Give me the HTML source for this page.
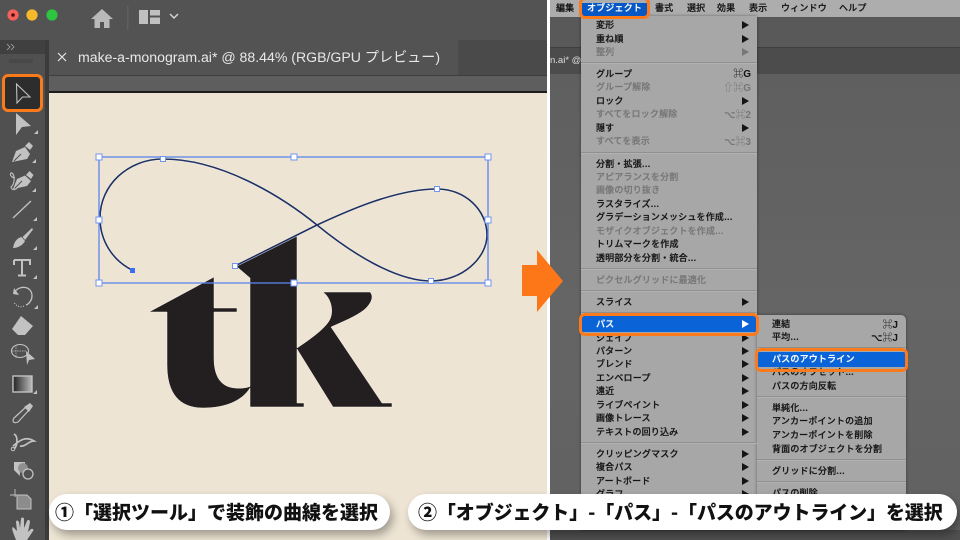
<!DOCTYPE html>
<html lang="ja"><head><meta charset="utf-8"><style>
html,body{margin:0;padding:0;width:960px;height:540px;overflow:hidden;background:#fff}
body{position:relative;font-family:"Liberation Sans","Noto Sans CJK JP",sans-serif}
div{position:absolute;box-sizing:border-box}
.m{font-size:9px;line-height:12px;height:12px;white-space:nowrap;color:#141414;font-weight:500;font-family:"Noto Sans CJK JP",sans-serif;letter-spacing:.02em;-webkit-text-stroke:.2px}
.d{color:#767676}
.w{color:#fff}
.s{height:2px;background:linear-gradient(#909090 50%,#b2b2b2 50%)}
.ar{width:0;height:0;border-left:7px solid #141414;border-top:4px solid transparent;border-bottom:4px solid transparent;left:742px}
.sc{font-size:10px;line-height:12px;color:#141414;font-weight:700;text-align:right;white-space:nowrap;font-family:"Liberation Sans","Noto Sans CJK JP","DejaVu Sans",sans-serif}
.o{border:3px solid #fb7a1c;border-radius:6px}
.p{background:#fff;border-radius:18px;box-shadow:3px 5px 9px rgba(0,0,0,.33);height:36px;top:494px;color:#111;font-weight:900;font-size:19px;line-height:35px;white-space:nowrap;font-family:"Noto Sans CJK JP",sans-serif}
</style></head><body>
<!-- left panel -->
<div style="left:0;top:0;width:547px;height:540px;background:#ede4d3;overflow:hidden">
<div style="left:0;top:0;width:547px;height:40px;background:#535353"></div>
<div style="left:0;top:40px;width:45px;height:500px;background:#505050"></div>
<div style="left:0;top:40px;width:45px;height:14px;background:#404040"></div>
<div style="left:45px;top:40px;width:4px;height:500px;background:#3b3b3b"></div>
<div style="left:49px;top:40px;width:498px;height:35px;background:#4a4a4a"></div>
<div style="left:49px;top:40px;width:409px;height:35px;background:#535353"></div>
<div style="left:49px;top:75px;width:498px;height:16px;background:#5e5e5e;border-top:1px solid #3e3e3e"></div>
<div style="left:49px;top:91px;width:498px;height:2px;background:#1d1d1d"></div>
<div style="left:78px;top:48px;font-size:14.1px;line-height:18px;color:#e8e8e8;white-space:nowrap">make-a-monogram.ai* @ 88.44% (RGB/GPU プレビュー)</div>
<svg width="547" height="540" viewBox="0 0 547 540" style="position:absolute;left:0;top:0">
<circle cx="13" cy="15" r="5.6" fill="#f4605a"/><circle cx="13" cy="15" r="1.8" fill="#4a0d0a"/>
<circle cx="32" cy="15" r="5.6" fill="#f7b92c"/><circle cx="52" cy="15" r="5.6" fill="#2cc640"/>
<path d="M102 9L91 19H94.500V28H100V22H104V28H109.500V19H113Z" fill="#b9b9b9"/>
<rect x="127" y="6" width="1.500" height="24" fill="#5f5f5f"/>
<path d="M139 10H148V24H139ZM150 10H160V15.500H150ZM150 17.500H160V24H150Z" fill="#c0c0c0"/>
<path d="M170 14L174 18L178 14" fill="none" stroke="#d5d5d5" stroke-width="1.500"/>
<path d="M7 44L10 47L7 50M11 44L14 47L11 50" fill="none" stroke="#a8a8a8" stroke-width=".8"/>
<path d="M10 59v4M12 59v4M14 59v4M16 59v4M18 59v4M20 59v4M22 59v4M24 59v4M26 59v4M28 59v4M30 59v4M32 59v4" stroke="#3c3c3c" stroke-width=".7"/>
<path d="M58 53L66 61M66 53L58 61" fill="none" stroke="#e5e5e5" stroke-width="1.200"/>
<rect x="4" y="77" width="36" height="33" rx="3" fill="#2d2d2d"/>
<path d="M16.500 84L17 103L22.500 97L30 97Z" fill="none" stroke="#c0c0c0" stroke-width="1.100"/>
<g fill="#c2c2c2" stroke="none">
<path d="M16 113L16 135L22 127L31 126Z"/><path d="M38 134h-4l4-4z"/>
<path d="M36 163h-4l4-4z"/><path d="M36 192h-4l4-4z"/><path d="M37 221h-4l4-4z"/><path d="M37 250h-4l4-4z"/><path d="M37 279h-4l4-4z"/><path d="M38 309h-4l4-4z"/><path d="M37 394h-4l4-4z"/>
<path d="M25 146L29 142L33 146L30 150Z"/>
<path d="M12 162L16 151L25 147L30 154L27 159Z"/>
<path d="M26 175L29.500 171L33.500 175L31 179Z"/>
<path d="M13 189L17 179L25 175.500L31 181L27 186Z"/>
<path d="M32 228L33 229.500L25 240L22.500 237Z"/>
<path d="M13 248C14 242 17 238 21.500 237L25 241C23 245 18 248 13 248Z"/>
<path d="M21 316L33 326L25 335H18L12 329Z"/>
<path d="M14 462h11v5a8 8 0 0 0-5 9L14 470Z"/>
<path d="M16 540C13 532 11 528 13 527L17 531L16 522C16 520 18 520 19 522L20 528L21 519C21 517 24 517 24 519L24 528L27 521C28 519 30 520 30 522L28 532L31 529C33 528 34 530 33 531L27 540Z"/>
</g>
<path d="M14 161L21 154" stroke="#505050" stroke-width="1"/>
<path d="M15 188L22 181" stroke="#505050" stroke-width="1"/>
<defs><linearGradient id="g" x1="0" x2="1"><stop offset="0" stop-color="#222"/><stop offset="1" stop-color="#bbb"/></linearGradient></defs>
<rect x="13" y="376" width="19" height="16" fill="url(#g)" stroke="#c2c2c2" stroke-width="1.400"/>
<path d="M13 218L31 201" stroke="#c2c2c2" stroke-width="1.300"/>
<path d="M15 178C9 177 10 172 12 173C15 175 15 184 11 187C12 191 16 190 18 187" fill="none" stroke="#c2c2c2" stroke-width="1.100"/>
<path d="M14 260H30V265M14 260V265M22 260V275M18 275.500H26" fill="none" stroke="#c2c2c2" stroke-width="2"/>
<path d="M14 293C18 285 32 285 32 296C32 300 29 304 26 305" fill="none" stroke="#c2c2c2" stroke-width="1.300"/>
<path d="M14 288L13 294L19 295Z" fill="#c2c2c2"/>
<path d="M24 306C20 308 16 306 14 302" fill="none" stroke="#c2c2c2" stroke-width="1.200" stroke-dasharray="1 1.500"/>
<ellipse cx="20" cy="351" rx="8.500" ry="6.500" fill="none" stroke="#c2c2c2" stroke-width="1.100"/>
<path d="M12 351H26M16 345V358" stroke="#c2c2c2" stroke-width=".7" stroke-dasharray="1.500 1"/>
<path d="M26 351L35 359L29 360L27 365Z" fill="#c2c2c2"/>
<path d="M14 418L26 407L29 410L18 422C13 424 12 421 14 418Z" fill="none" stroke="#c2c2c2" stroke-width="1.200"/>
<path d="M24 407L30 403L33 406L29 412Z" fill="#c2c2c2"/>
<path d="M14 434C18 436 18 445 14 449M13 446C20 440 26 436 34 441C28 441 26 447 20 446" fill="none" stroke="#c2c2c2" stroke-width="1.700"/>
<circle cx="13" cy="449" r="1.800" fill="none" stroke="#c2c2c2"/>
<circle cx="23" cy="468" r="5" fill="#8f8f8f"/><circle cx="28" cy="474" r="5" fill="#505050" stroke="#c2c2c2" stroke-width="1.300"/>
<path d="M15 489V497M10 495H19" stroke="#c2c2c2" stroke-width=".9"/>
<path d="M17 495H27L31 499V509H17Z" fill="#8c8c8c" stroke="#c2c2c2" stroke-width="1"/>
<!-- tk -->
<path d="M214 277V308H237V312H214V358C214 378 222 387 235 388C241 388.500 246 388 250 386.500V278L236 266L297 236V348C312 338 324 329 329 321C334 313 332 299 323 292H370C374 296 372 303 364 310C355 317 342 322 331 327L382 403H392V407H333L297 349V403H304V407H250V388C242 401 225 408 203 408C179 408 167 393 167 365V312H149Z" fill="#231f20" stroke="#f8f3e9" stroke-width=".5"/>
<!-- curve -->
<path d="M132 270C112 260 100 240 100 218C100 185 128 159 163 159C220 159 280 195 317 225C350 252 395 281 431 281C462 281 487 258 487 235C487 210 465 189 437 189C395 189 345 212 317 225L297 235L235 266" fill="none" stroke="#f6f2ea" stroke-width="2.500"/>
<path d="M132 270C112 260 100 240 100 218C100 185 128 159 163 159C220 159 280 195 317 225C350 252 395 281 431 281C462 281 487 258 487 235C487 210 465 189 437 189C395 189 345 212 317 225L297 235L235 266" fill="none" stroke="#1f3263" stroke-width="1.600"/>
<rect x="99" y="157" width="389" height="126" fill="none" stroke="#5b85ee" stroke-width="1.300"/>
<g fill="#fff" stroke="#7196f0" stroke-width="1">
<rect x="96" y="154" width="6" height="6"/><rect x="291" y="154" width="6" height="6"/><rect x="485" y="154" width="6" height="6"/>
<rect x="96" y="217" width="6" height="6"/><rect x="485" y="217" width="6" height="6"/>
<rect x="96" y="280" width="6" height="6"/><rect x="291" y="280" width="6" height="6"/><rect x="485" y="280" width="6" height="6"/>
<rect x="160.500" y="156.500" width="5" height="5"/><rect x="434.500" y="186.500" width="5" height="5"/><rect x="428.500" y="278.500" width="5" height="5"/><rect x="232.500" y="263.500" width="5" height="5"/>
</g>
<rect x="130" y="268" width="5" height="5" fill="#3b6ef0"/>
</svg>
<div class="o" style="left:2px;top:74px;width:41px;height:38px"></div>
</div>
<!-- right panel -->
<div style="left:550px;top:0;width:410px;height:540px;background:linear-gradient(#5f5f5f 75px,#656565 300px,#626262 490px);overflow:hidden">
<div style="left:0;top:0;width:410px;height:17px;background:#adadad"></div>
<div style="left:0;top:17px;width:410px;height:30px;background:#595959"></div>
<div style="left:0;top:47px;width:410px;height:27px;background:#4c4c4c;border-top:1px solid #3f3f3f"></div>
<div style="left:0;top:55px;font-size:9.500px;line-height:11px;color:#ddd;white-space:nowrap">n.ai* @</div>
<div style="left:0;top:530px;width:410px;height:10px;background:#505050"></div>
</div>
<div style="left:581px;top:16px;width:176px;height:514px;background:#a7a7a7;box-shadow:0 0 3px rgba(0,0,0,.4)"></div>
<div style="left:757px;top:315px;width:149px;height:215px;background:#a7a7a7;border-radius:0 5px 0 0;box-shadow:0 0 3px rgba(0,0,0,.4)"></div>
<!-- menubar -->
<div class="m" style="left:556px;top:2px">編集</div>
<div style="left:581px;top:3px;width:67px;height:13px;background:#0758c5"></div>
<div class="m w" style="left:587px;top:2px">オブジェクト</div>
<div class="m" style="left:655px;top:2px">書式</div>
<div class="m" style="left:687px;top:2px">選択</div>
<div class="m" style="left:717px;top:2px">効果</div>
<div class="m" style="left:749px;top:2px">表示</div>
<div class="m" style="left:781px;top:2px">ウィンドウ</div>
<div class="m" style="left:839px;top:2px">ヘルプ</div>
<!-- menu -->
<div class="m" style="left:596px;top:19px">変形</div><div class="ar" style="top:21px"></div>
<div class="m" style="left:596px;top:33px">重ね順</div><div class="ar" style="top:35px"></div>
<div class="m d" style="left:596px;top:46px">整列</div><div class="ar" style="top:48px;border-left-color:#777"></div>
<div class="s" style="left:581px;top:62px;width:176px"></div>
<div class="m" style="left:596px;top:68px">グループ</div><div class="sc" style="right:209px;top:69px">⌘G</div>
<div class="m d" style="left:596px;top:81px">グループ解除</div><div class="sc" style="right:209px;top:83px;color:#767676">⇧⌘G</div>
<div class="m" style="left:596px;top:95px">ロック</div><div class="ar" style="top:97px"></div>
<div class="m d" style="left:596px;top:108px">すべてをロック解除</div><div class="sc" style="right:209px;top:110px;color:#767676">⌥⌘2</div>
<div class="m" style="left:596px;top:122px">隠す</div><div class="ar" style="top:124px"></div>
<div class="m d" style="left:596px;top:135px">すべてを表示</div><div class="sc" style="right:209px;top:137px;color:#767676">⌥⌘3</div>
<div class="s" style="left:581px;top:152px;width:176px"></div>
<div class="m" style="left:596px;top:158px">分割・拡張...</div>
<div class="m d" style="left:596px;top:171px">アピアランスを分割</div>
<div class="m d" style="left:596px;top:184px">画像の切り抜き</div>
<div class="m" style="left:596px;top:198px">ラスタライズ...</div>
<div class="m" style="left:596px;top:211px">グラデーションメッシュを作成...</div>
<div class="m d" style="left:596px;top:225px">モザイクオブジェクトを作成...</div>
<div class="m" style="left:596px;top:238px">トリムマークを作成</div>
<div class="m" style="left:596px;top:252px">透明部分を分割・統合...</div>
<div class="s" style="left:581px;top:268px;width:176px"></div>
<div class="m d" style="left:596px;top:274px">ピクセルグリッドに最適化</div>
<div class="s" style="left:581px;top:290px;width:176px"></div>
<div class="m" style="left:596px;top:296px">スライス</div><div class="ar" style="top:298px"></div>
<div class="s" style="left:581px;top:312px;width:176px"></div>
<div style="left:581px;top:316px;width:176px;height:16px;background:#0a64d8"></div>
<div class="m w" style="left:596px;top:318px">パス</div><div class="ar" style="top:320px;border-left-color:#fff"></div>
<div class="m" style="left:596px;top:332px">シェイプ</div><div class="ar" style="top:334px"></div>
<div class="m" style="left:596px;top:345px">パターン</div><div class="ar" style="top:347px"></div>
<div class="m" style="left:596px;top:358px">ブレンド</div><div class="ar" style="top:360px"></div>
<div class="m" style="left:596px;top:372px">エンベロープ</div><div class="ar" style="top:374px"></div>
<div class="m" style="left:596px;top:385px">遠近</div><div class="ar" style="top:387px"></div>
<div class="m" style="left:596px;top:399px">ライブペイント</div><div class="ar" style="top:401px"></div>
<div class="m" style="left:596px;top:412px">画像トレース</div><div class="ar" style="top:414px"></div>
<div class="m" style="left:596px;top:426px">テキストの回り込み</div><div class="ar" style="top:428px"></div>
<div class="s" style="left:581px;top:442px;width:176px"></div>
<div class="m" style="left:596px;top:448px">クリッピングマスク</div><div class="ar" style="top:450px"></div>
<div class="m" style="left:596px;top:461px">複合パス</div><div class="ar" style="top:463px"></div>
<div class="m" style="left:596px;top:475px">アートボード</div><div class="ar" style="top:477px"></div>
<div class="m" style="left:596px;top:488px">グラフ</div><div class="ar" style="top:490px"></div>
<!-- submenu -->
<div class="m" style="left:772px;top:318px">連結</div><div class="sc" style="right:62px;top:320px">⌘J</div>
<div class="m" style="left:772px;top:331px">平均...</div><div class="sc" style="right:62px;top:333px">⌥⌘J</div>
<div class="s" style="left:757px;top:347px;width:149px"></div>
<div class="m" style="left:772px;top:366px">パスのオフセット...</div>
<div class="m" style="left:772px;top:380px">パスの方向反転</div>
<div class="s" style="left:757px;top:396px;width:149px"></div>
<div class="m" style="left:772px;top:402px">単純化...</div>
<div class="m" style="left:772px;top:415px">アンカーポイントの追加</div>
<div class="m" style="left:772px;top:429px">アンカーポイントを削除</div>
<div class="m" style="left:772px;top:443px">背面のオブジェクトを分割</div>
<div class="s" style="left:757px;top:459px;width:149px"></div>
<div class="m" style="left:772px;top:465px">グリッドに分割...</div>
<div class="s" style="left:757px;top:481px;width:149px"></div>
<div class="m" style="left:772px;top:487px">パスの削除...</div>
<div style="left:757px;top:352px;width:149px;height:15px;background:#0a64d8"></div>
<div class="m w" style="left:772px;top:353px">パスのアウトライン</div>
<!-- orange -->
<div class="o" style="left:579px;top:-3px;width:71px;height:22px"></div>
<div class="o" style="left:579px;top:313px;width:180px;height:23px"></div>
<div class="o" style="left:755px;top:348px;width:153px;height:24px"></div>
<svg width="42" height="63" viewBox="522 250 42 63" style="position:absolute;left:522px;top:250px"><path d="M522 265H537V250L563 281L537 312V296H522Z" fill="#fd7617"/></svg>
<!-- pills -->
<div class="p" style="left:49px;width:341px;padding-left:6px">①「選択ツール」で装飾の曲線を選択</div>
<div class="p" style="left:408px;width:549px;padding-left:10px;letter-spacing:-.1px">②「オブジェクト」-「パス」-「パスのアウトライン」を選択</div>
</body></html>
